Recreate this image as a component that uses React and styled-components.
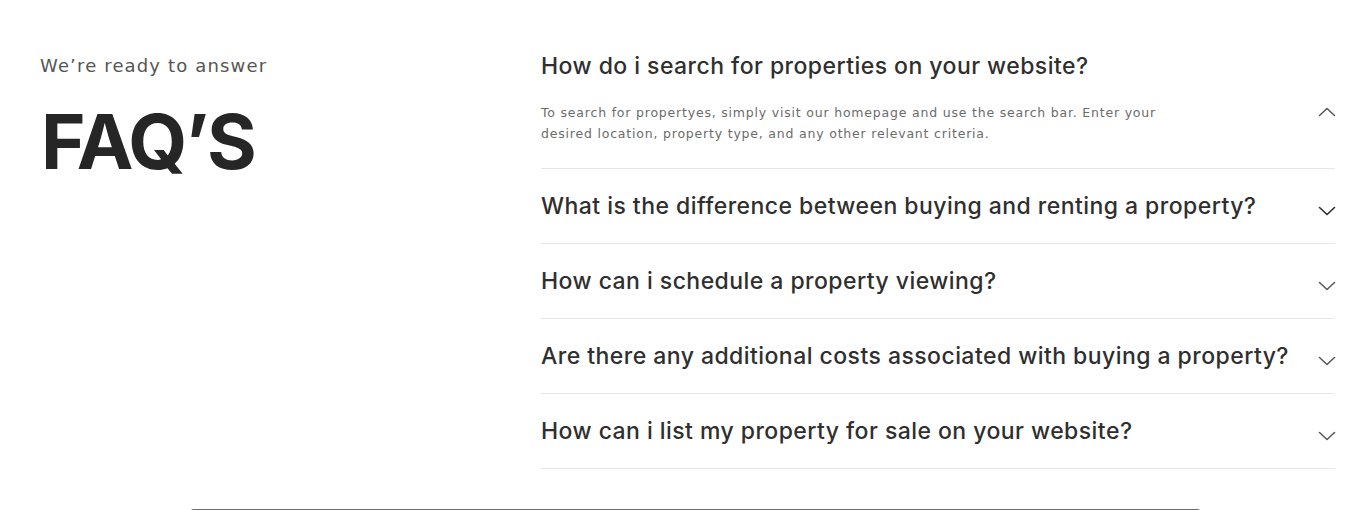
import React from "react";
import styled, { createGlobalStyle } from "styled-components";

const Global = createGlobalStyle`
  html, body { margin: 0; padding: 0; background: #fff; }
  body { overflow: hidden; }
  * { box-sizing: border-box; }
`;

const Page = styled.div`
  width: 1353px;
  height: 510px;
  overflow: hidden;
  background: #fff;
`;

const Section = styled.section`
  display: grid;
  grid-template-columns: 501px 794px;
  padding: 29px 0 0 40px;
  height: 480px;
`;

const Intro = styled.div`
  display: flex;
  flex-direction: column;
  padding-top: 27px;
`;

const Eyebrow = styled.p`
  margin: 0;
  font-family: "DejaVu Sans", sans-serif;
  font-size: 18px;
  letter-spacing: 1.15px;
  font-weight: 400;
  color: #555;
  line-height: 20px;
`;

const Title = styled.h2`
  margin: 27px 0 0 1px;
  font-family: Inter, sans-serif;
  font-size: 76px;
  font-weight: 700;
  letter-spacing: -2px;
  line-height: 1;
  color: #262626;
`;

const List = styled.div`
  display: flex;
  flex-direction: column;
`;

const Item = styled.div`
  border-bottom: 1px solid #e6e6e6;
`;

const Header = styled.div`
  display: flex;
  align-items: center;
  justify-content: space-between;
  height: 74px;
`;

const Question = styled.h3`
  margin: 0;
  font-family: Inter, sans-serif;
  font-size: 23px;
  font-weight: 500;
  letter-spacing: 0.45px;
  color: #2f2f2f;
`;

const Panel = styled.div`
  display: flex;
  justify-content: space-between;
  align-items: flex-start;
  padding: 0 0 24px;
  margin-top: -1px;
`;

const Answer = styled.p`
  margin: 0;
  max-width: 625px;
  font-family: "DejaVu Sans", sans-serif;
  font-size: 12.5px;
  letter-spacing: 0.8px;
  line-height: 21px;
  color: #6b6b6b;
`;

const IconBox = styled.span`
  display: flex;
  width: 18px;
  margin-right: -1px;
  margin-top: ${(p) => p.$offset || 0}px;
  color: ${(p) => (p.$strong ? "#2b2b2b" : "#5a5a5a")};
`;

const NextCard = styled.div`
  margin: 29px 0 0 190px;
  width: 1011px;
  height: 20px;
  border-top: 1px solid #6b6b6b;
  border-radius: 4px 4px 0 0;
`;

const Chevron = ({ up }) => (
  <svg width="18" height="10" viewBox="0 0 18 10" fill="none">
    <path
      d={up ? "M1.5 8.5 L9 1.5 L16.5 8.5" : "M1.5 1.5 L9 8.5 L16.5 1.5"}
      stroke="currentColor"
      strokeWidth="1.6"
      strokeLinecap="round"
      strokeLinejoin="round"
    />
  </svg>
);

const faqs = [
  "What is the difference between buying and renting a property?",
  "How can i schedule a property viewing?",
  "Are there any additional costs associated with buying a property?",
  "How can i list my property for sale on your website?",
];

export default function App() {
  return (
    <Page>
      <Global />
      <Section>
        <Intro>
          <Eyebrow>We’re ready to answer</Eyebrow>
          <Title>FAQ’S</Title>
        </Intro>
        <List>
          <Item>
            <Header>
              <Question>How do i search for properties on your website?</Question>
            </Header>
            <Panel>
              <Answer>
                To search for propertyes, simply visit our homepage and use the search bar. Enter your desired location, property type, and any other relevant criteria.
              </Answer>
              <IconBox $offset={5}>
                <Chevron up />
              </IconBox>
            </Panel>
          </Item>
          {faqs.map((q, i) => (
            <Item key={q}>
              <Header>
                <Question>{q}</Question>
                <IconBox $strong={i === 0} $offset={9}>
                  <Chevron />
                </IconBox>
              </Header>
            </Item>
          ))}
        </List>
      </Section>
      <NextCard />
    </Page>
  );
}
